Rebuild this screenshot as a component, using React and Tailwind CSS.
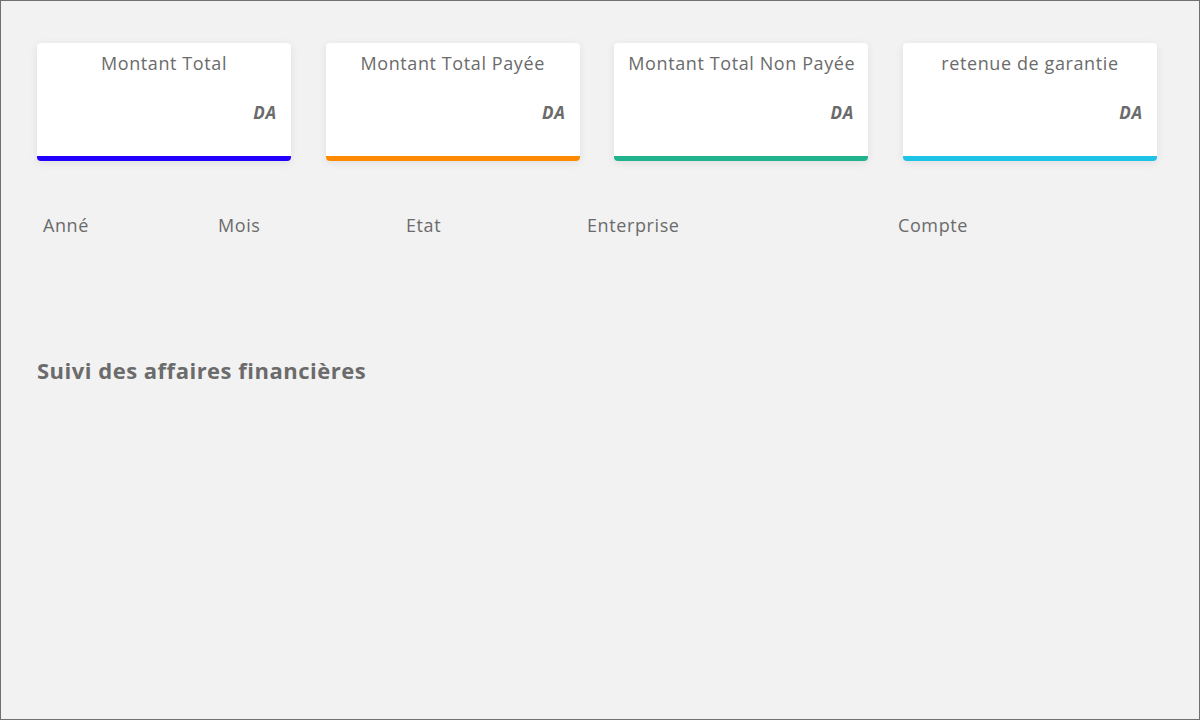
import React from 'react';

const cards = [
  { title: 'Montant Total', bar: 'border-[#2200ff]' },
  { title: 'Montant Total Payée', bar: 'border-[#ff8a00]' },
  { title: 'Montant Total Non Payée', bar: 'border-[#20b38e]' },
  { title: 'retenue de garantie', bar: 'border-[#1ec2e6]' },
];

const filters = [
  { label: 'Anné', w: 'w-[175px]' },
  { label: 'Mois', w: 'w-[188px]' },
  { label: 'Etat', w: 'w-[181px]' },
  { label: 'Enterprise', w: 'w-[311px]' },
  { label: 'Compte', w: 'w-[200px]' },
];

function StatCard({ title, bar }) {
  return (
    <div className={`w-[254px] h-[118px] bg-white rounded-[4px] shadow-[0_2px_8px_rgba(0,0,0,0.08)] border-b-[5px] ${bar} flex flex-col px-[14px] pt-[7px]`}>
      <p className="text-center text-[18px] leading-[26px] tracking-[0.6px] text-[#6b6b6b] whitespace-nowrap">{title}</p>
      <p className="mt-[25px] text-right text-[17px] leading-[24px] tracking-[0.8px] font-bold italic text-[#6b6b6b]">DA</p>
    </div>
  );
}

export default function App() {
  return (
    <div
      className="h-[720px] w-[1200px] bg-[#f2f2f2] border border-[#707070] overflow-hidden"
      style={{ fontFamily: '"Open Sans", "Liberation Sans", sans-serif' }}
    >
      <div className="pl-[36px] pt-[42px]">
        <div className="w-[1120px] flex justify-between">
          {cards.map((c) => (
            <StatCard key={c.title} {...c} />
          ))}
        </div>
        <div className="mt-[51px] flex pl-[6px]">
          {filters.map((f) => (
            <div key={f.label} className={`${f.w} text-[18px] leading-[26px] tracking-[0.6px] text-[#6b6b6b]`}>
              {f.label}
            </div>
          ))}
        </div>
        <h2 className="mt-[118px] text-[22px] leading-[28px] tracking-[0.5px] font-bold text-[#6b6b6b]">
          Suivi des affaires financières
        </h2>
      </div>
    </div>
  );
}
